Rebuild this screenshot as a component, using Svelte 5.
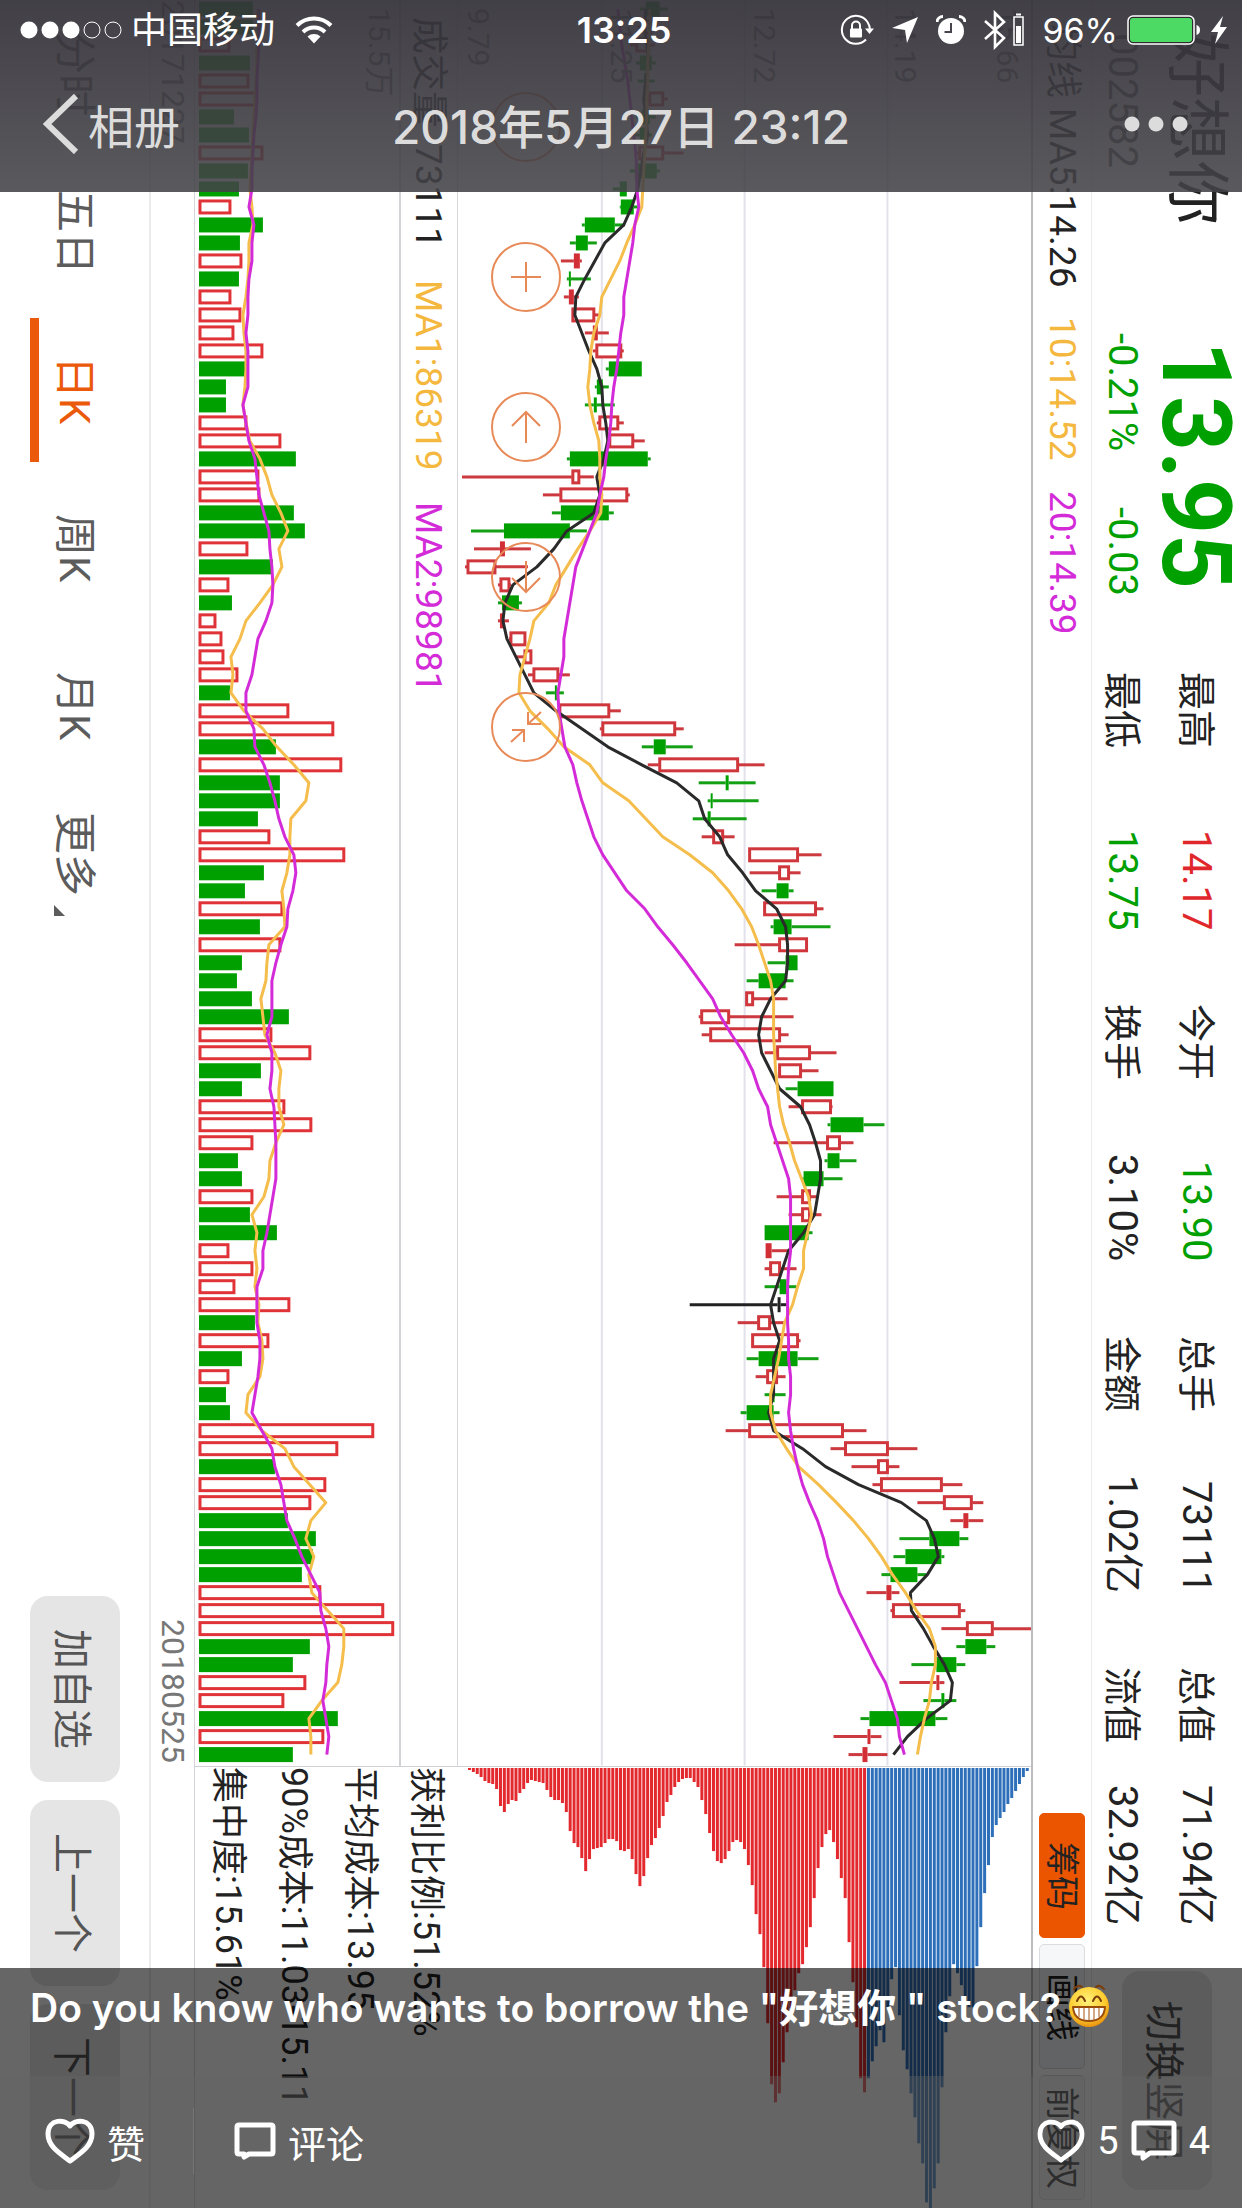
<script>
  const STEP = 18;
  const FIRST = 9;
  const BAR = 15;
  const VOLUME_BASE = 199;

  const rowY = i => FIRST + STEP * i;
  const toPoints = str => str.trim().split(/\s+/).map((x, i) => `${x},${rowY(i)}`).join(' ');

  // end of each volume bar, followed by its colour
  const volumes = `
    253g 253g 230r 250g 249r 257r 234g 249g 263r 248g 239g 231r 263g 240g 242r 239g 231r 241r 234r 263r
    246g 226g 226g 247r 281r 296g 259r 260r 294g 305g 248r 273g 229r 232g 216r 222r 224r 238r 230g 289r
    334r 276g 342r 280g 280g 258g 270r 345r 264g 245g 283r 260g 281r 242g 237g 252g 289g 272r 311r 261g
    242g 285r 312r 253r 238g 242g 253r 250g 277g 229r 253r 235r 290r 255g 269r 242g 229r 226g 230g 374r
    338r 275g 326r 311r 288g 316g 313g 302g 321r 384r 394r 310g 293g 306r 284r 338g 324r 293g
  `.trim().split(/\s+/).map(t => ({ end: parseInt(t), color: t.slice(-1) }));

  // low - body start - body end - high, followed by the colour
  const candles = `
    640-646-660-668g 638-644-652-660r 630-636-650-655r 636-640-652-656g 638-644-646-655g
    645-649-664-668r 636-642-650-656g 630-640-646-652g 636-639-664-684r 630-635-657-660g
    613-620-627-627g 620-621-634-640g 582-585-615-625g 570-576-588-597g 561-574-580-582r
    567-569-571-591g 564-569-574-579r 572-572-595-599r 585-593-598-609r 593-596-622-624r
    606-609-642-642g 595-597-603-609g 585-594-597-615g 597-599-619-624r 609-609-634-645r
    567-570-648-651g 462-572-580-594r 543-560-628-630r 552-561-609-614g 471-504-570-587g
    474-500-505-531r 465-467-496-528r 498-500-510-511r 498-502-519-522g 498-500-504-509r
    509-510-526-526r 517-524-532-532r 528-533-559-570r 546-555-557-564g 559-559-610-621r
    600-602-676-684r 642-654-666-693g 648-659-739-765r 699-726-729-756g 708-711-713-759g
    693-708-711-747g 702-713-724-735r 749-749-799-822r 750-779-790-801r 762-777-789-794g
    764-764-817-824r 771-774-792-831g 735-779-808-808r 768-786-798-798g 747-759-786-794g
    746-746-754-788r 699-701-730-794r 702-710-781-789r 765-777-811-837r 779-779-802-819r
    786-798-834-834g 789-802-832-833r 828-831-864-885g 774-827-841-854r 825-828-840-857g
    802-804-824-843g 777-802-811-819r 789-802-811-822r 765-765-809-813g 766-766-772-789r
    765-770-781-797r 765-780-787-797g 690-778-781-787k 738-758-771-785r 752-752-799-801r
    747-759-798-819g 756-767-778-786r 765-772-775-786g 741-747-774-780g 726-749-844-867r
    831-845-889-918r 852-878-889-900r 873-881-943-963r 918-944-973-984r 951-964-969-984r
    900-930-960-969g 894-906-942-945g 882-891-918-927g 867-887-892-900r 891-893-961-966r
    942-967-994-1032r 957-966-987-996g 912-937-957-966g 900-937-940-945r 924-942-945-957g
    861-870-936-948g 834-868-871-882r 849-863-868-888r
  `.trim().split(/\s+/).map(t => {
    const [low, from, to, high] = t.slice(0, -1).split('-').map(Number);
    const color = t.slice(-1);
    return { low, from, to, high, color, hollow: color === 'r' && to - from > 7 };
  });

  const ma5 = toPoints(`
    646 645 647 649 646 644 646 648 644 641 638 632 624 605 595 585 576 575 582 589 597 602 603 606 608
    604 597 600 594 567 554 537 513 505 503 507 516 525 534 556 582 608 642 677 699 705 720 728 743 756
    777 786 788 788 786 771 762 759 762 771 780 801 810 816 821 821 818 815 804 789 783 777 771 774 780
    774 774 774 769 774 803 826 859 902 927 935 939 928 911 912 924 934 945 953 951 927 908 894`);
  const ma10 = toPoints(`
    650 650 649 648 648 647 647 646 645 644 643 642 635 627 620 611 602 600 594 591 590 588 590 594 599
    600 600 602 601 590 578 567 556 549 534 530 525 520 519 530 548 564 590 603 629 646 663 690 713 729
    742 752 759 765 771 774 774 774 775 776 778 780 784 790 795 802 809 812 808 804 804 798 793 785 782
    779 775 771 771 776 787 799 819 837 854 869 882 893 906 917 930 936 936 932 930 925 921 918`);
  const ma20 = toPoints(`
    618 620 622 625 628 630 632 634 636 637 637 639 635 633 630 627 624 624 621 619 617 614 612 611 609
    606 604 600 597 590 583 576 573 570 567 564 564 561 558 559 562 565 573 577 582 588 594 603 615 627
    645 658 673 687 700 713 721 732 744 753 759 768 771 777 783 789 791 791 791 791 789 788 788 788 789
    789 791 791 789 791 794 798 803 810 818 824 828 834 840 849 858 867 876 886 892 898 900 905`);
  const volumeMa1 = toPoints(`
    258 258 257 257 256 255 254 253 252 251 250 252 253 249 249 248 246 243 244 246 246 245 243 246 250
    260 267 272 281 288 279 282 273 260 246 240 231 233 231 244 263 277 294 309 306 291 290 290 287 282
    284 285 269 267 266 261 263 265 275 281 279 279 284 276 270 269 264 252 257 255 257 255 259 258 262
    263 260 248 246 262 285 294 310 326 311 306 314 309 312 328 344 344 342 338 322 309 311 311`);
  const volumeMa2 = toPoints(`
    259 259 259 258 257 257 256 254 253 252 252 249 254 252 252 249 248 248 246 248 248 248 243 246 249
    255 257 259 264 269 270 272 273 272 266 258 255 252 246 246 254 255 264 270 275 279 285 294 296 293
    288 287 281 276 272 272 272 267 272 272 270 274 275 276 276 276 273 270 267 263 263 257 257 257 260
    260 258 255 252 262 272 275 281 284 287 295 302 311 320 321 326 329 327 326 323 326 329 327`);

  const CHIP_PROFIT = 103;
  const chips = `
    2 4 6 9 13 15 16 21 38 44 36 32 33 25 21 15 12 13 14 15 22 29 32 32 35 44 63 75 79 90 103 91 81 80 79
    75 71 71 73 82 83 81 91 106 118 108 90 77 70 60 48 34 27 19 14 11 10 10 14 19 32 46 65 83 93 95 91 83
    74 72 74 81 97 117 146 166 199 255 316 334 325 294 264 240 222 205 196 179 159 130 100 79 66 62 74 91
    110 130 174 214 259 310 324 310 293 278 262 274 240 211 199 247 282 301 325 349 375 395 434 442 420
    395 319 264 228 196 205 217 228 239 239 198 159 125 97 69 57 50 44 36 30 23 16 9 3
  `.trim().split(/\s+/).map(Number);

  const priceGrid = [602, 745, 888];
  const priceLabels = [
    [468, '9.79'],
    [611, '11.25'],
    [754, '12.72'],
    [896, '14.19'],
    [998, '15.66'],
  ];

  const tools = [
    { name: '缩小', d: 'M0 -15V15' },
    { name: '放大', d: 'M-15 0H15M0 -15V15' },
    { name: '左移', d: 'M0 16V-15M-14 -1L0 -15L14 -1' },
    { name: '右移', d: 'M0 -16V15M-14 1L0 15L14 1' },
    { name: '退出', d: 'M15 -15L2 -3M2 -15V-3H15M-15 15L-2 3M-14 3H-2V15' },
  ];

  const statRows = [
    [['最高', '14.17', 'up'], ['今开', '13.90', 'down'], ['总手', '73111', ''], ['总值', '71.94亿', '']],
    [['最低', '13.75', 'down'], ['换手', '3.10%', ''], ['金额', '1.02亿', ''], ['流值', '32.92亿', '']],
  ];

  const tabs = ['分时', '五日', '日K', '周K', '月K', '更多'];
  let currentTab = $state('日K');
</script>

<main class="viewer">
  <div class="photo">
    <aside class="side turned">
      <nav class="tabs">
        {#each tabs as tab}
          <button
            type="button"
            class="tab"
            class:is--current={tab === currentTab}
            onclick={() => (currentTab = tab)}
          >{tab}{#if tab === '更多'}<span class="tab__corner"></span>{/if}</button>
        {/each}
      </nav>
      <div class="side__actions">
        <button type="button" class="gray-btn">加自选</button>
        <button type="button" class="gray-btn">上一个</button>
        <button type="button" class="gray-btn">下一个</button>
      </div>
    </aside>

    <div class="dates turned">
      <div class="dates__range">
        <span>20171227</span>
        <span>20180525</span>
      </div>
    </div>

    <section class="charts">
      <div class="trend">
        <svg class="trend__volume" viewBox="195 0 204 1766" preserveAspectRatio="none">
          {#each volumes as v, i}
            {#if v.color === 'r'}
              <rect class="hollow" x={VOLUME_BASE + 1} y={rowY(i) - 6} width={v.end - VOLUME_BASE - 2} height="12" />
            {:else}
              <rect class="solid g" x={VOLUME_BASE} y={rowY(i) - BAR / 2} width={v.end - VOLUME_BASE} height={BAR} />
            {/if}
          {/each}
          <polyline class="line yellow" points={volumeMa1} />
          <polyline class="line magenta" points={volumeMa2} />
          <text class="axis" transform="translate(369 8) rotate(90)">15.5万</text>
        </svg>

        <div class="legend legend--volume turned">
          <span>成交量</span>
          <span class="legend__value">73111</span>
          <span class="text-yellow">MA1:86319</span>
          <span class="text-magenta">MA2:98981</span>
        </div>

        <div class="trend__price">
          <svg viewBox="458 0 574 1766" preserveAspectRatio="none">
            {#each priceGrid as x}
              <line class="grid" x1={x} x2={x} y1="0" y2="1766" />
            {/each}
            {#each candles as c, i}
              <line class="wick {c.color}" x1={c.low} x2={c.from} y1={rowY(i)} y2={rowY(i)} />
              <line class="wick {c.color}" x1={c.to} x2={c.high} y1={rowY(i)} y2={rowY(i)} />
              {#if c.hollow}
                <rect class="hollow dim" x={c.from + 1} y={rowY(i) - 6} width={c.to - c.from - 2} height="12" />
              {:else}
                <rect class="solid {c.color}" x={c.from} y={rowY(i) - BAR / 2} width={c.to - c.from} height={BAR} />
              {/if}
            {/each}
            <polyline class="line black" points={ma5} />
            <polyline class="line yellow" points={ma10} />
            <polyline class="line magenta" points={ma20} />
            {#each priceLabels as [x, label]}
              <text class="axis" transform="translate({x} 8) rotate(90)">{label}</text>
            {/each}
          </svg>
          <div class="tools">
            {#each tools as tool}
              <button type="button" class="tool" aria-label={tool.name}>
                <svg viewBox="-35 -35 70 70">
                  <circle r="34" />
                  <path d={tool.d} />
                </svg>
              </button>
            {/each}
          </div>
        </div>
      </div>

      <div class="detail">
        <div class="cost turned">
          <p>获利比例:51.52%</p>
          <p>平均成本:13.95</p>
          <p>90%成本:11.03-15.11</p>
          <p>集中度:15.61%</p>
        </div>
        <svg class="chips" viewBox="459 0 573 441" preserveAspectRatio="none">
          {#each chips as length, i}
            <rect class={i < CHIP_PROFIT ? 'chip-red' : 'chip-blue'} x={468 + 3.88 * i} y="1" width="3" height={length} />
          {/each}
        </svg>
      </div>
    </section>

    <div class="legend legend--price turned">
      <span>均线</span>
      <span class="legend__ma5">MA5:14.26</span>
      <span class="text-yellow">10:14.52</span>
      <span class="text-magenta">20:14.39</span>
      <div class="modes">
        <button type="button" class="mode is--active">筹码</button>
        <button type="button" class="mode">画线</button>
        <button type="button" class="mode">前复权</button>
      </div>
    </div>

    <header class="quote turned">
      <div class="quote__name">
        <h1>好想你</h1>
        <p>002582</p>
      </div>
      <div class="quote__price">
        <strong>13.95</strong>
        <p><span>-0.21%</span><span>-0.03</span></p>
      </div>
      <div class="stats">
        {#each statRows as row}
          <dl class="stats__row">
            {#each row as [label, value, tone]}
              <div class="stat">
                <dt>{label}</dt>
                <dd class={tone}>{value}</dd>
              </div>
            {/each}
          </dl>
        {/each}
      </div>
      <button type="button" class="gray-btn gray-btn--long">切换竖屏</button>
    </header>
  </div>

  <div class="top-bar">
    <div class="status">
      <div class="status__side">
        <svg class="signal" viewBox="0 0 102 20">
          <circle cx="9" cy="10" r="8.5" fill="#fff" />
          <circle cx="30" cy="10" r="8.5" fill="#fff" />
          <circle cx="51" cy="10" r="8.5" fill="#fff" />
          <circle cx="72" cy="10" r="8" fill="none" stroke="#fff" />
          <circle cx="93" cy="10" r="8" fill="none" stroke="#fff" />
        </svg>
        <span class="carrier">中国移动</span>
        <svg class="wifi" viewBox="0 0 38 28">
          <path d="M2 9.500A24 24 0 0 1 36 9.500" />
          <path d="M8 16A16 16 0 0 1 30 16" />
          <path class="wifi__dot" d="M12.500 20.500A10 10 0 0 1 25.500 20.500L19 27.500Z" />
        </svg>
      </div>
      <time class="clock">13:25</time>
      <div class="status__side status__side--right">
        <svg width="34" height="32" viewBox="0 0 34 32">
          <path d="M27.500 8A14 14 0 1 0 26 25.500M27.500 8Q30 12 30 16" fill="none" stroke="#fff" stroke-width="2" />
          <path d="M25 14.500H34L29.500 20Z" fill="#fff" />
          <path d="M12 15V11.500a4 4 0 0 1 8 0V15" fill="none" stroke="#fff" stroke-width="2" />
          <rect x="10" y="14.500" width="12" height="9" rx="1" fill="#fff" />
        </svg>
        <svg width="28" height="28" viewBox="0 0 28 28">
          <path d="M27 1L16 27L14 14L1 12Z" fill="#fff" />
        </svg>
        <svg width="30" height="30" viewBox="0 0 30 30">
          <circle cx="15" cy="16" r="13" fill="#fff" />
          <path d="M1 7A6 6 0 0 1 7 1.500M29 7A6 6 0 0 0 23 1.500" fill="none" stroke="#fff" stroke-width="3" />
          <path d="M15 8V17H8.500" fill="none" stroke="#47454b" stroke-width="2" />
        </svg>
        <svg width="42" height="40" viewBox="0 0 42 40">
          <path d="M2 11L21 28L12 37V3L21 12L2 29" fill="none" stroke="#fff" stroke-width="2.600" />
          <rect x="31" y="7" width="9" height="28" fill="none" stroke="#fff" stroke-width="1.500" />
          <rect x="33" y="16" width="5" height="17" fill="#fff" />
          <path d="M33 4.500H38" stroke="#fff" stroke-width="2" />
        </svg>
        <div class="battery">
          <span>96%</span>
          <svg width="74" height="30" viewBox="0 0 74 30">
            <rect x="1" y="1" width="66" height="28" rx="5" fill="#2c2b2f" stroke="#fff" stroke-width="1.500" />
            <rect x="3" y="3" width="62" height="24" rx="3" fill="#4cd964" />
            <path d="M69.500 10Q73 11 73 15T69.500 20Z" fill="#fff" />
          </svg>
          <svg width="18" height="30" viewBox="0 0 18 30">
            <path d="M13 1L1 17H8L5 29L17 12H10Z" fill="#fff" />
          </svg>
        </div>
      </div>
    </div>

    <div class="title-bar">
      <button type="button" class="back">
        <svg width="36" height="60" viewBox="0 0 36 60">
          <path d="M33 2L4 30L33 58" fill="none" stroke="currentColor" stroke-width="6" />
        </svg>
        <span>相册</span>
      </button>
      <h2>2018年5月27日 23:12</h2>
      <button type="button" class="more" aria-label="更多">
        <svg width="64" height="18" viewBox="0 0 64 18">
          <circle cx="8" cy="9" r="7.500" />
          <circle cx="32" cy="9" r="7.500" />
          <circle cx="56" cy="9" r="7.500" />
        </svg>
      </button>
    </div>
  </div>

  <div class="bottom-bar">
    <p class="caption">
      <span>Do you know who wants to borrow the "好想你 " stock?</span>
      <svg width="44" height="44" viewBox="0 0 44 44">
        <defs>
          <radialGradient id="face" cx="45%" cy="35%" r="65%">
            <stop offset="0" stop-color="#fff27a" />
            <stop offset="0.700" stop-color="#fdcb2e" />
            <stop offset="1" stop-color="#e9920f" />
          </radialGradient>
        </defs>
        <circle cx="22" cy="23" r="20" fill="url(#face)" />
        <path d="M7 5Q11 0 15 3M29 3Q33 0 37 5M10 17Q14 8 18 17M26 17Q30 8 34 17" fill="none" stroke="#7b3c08" stroke-width="2" stroke-linecap="round" />
        <path d="M6 23H38Q37 37 22 37T6 23Z" fill="#fff" stroke="#9a4d0b" stroke-width="2" stroke-linejoin="round" />
        <path d="M12 24V33M17 24V36M22 24V36M27 24V36M32 24V33" stroke="#b4703a" stroke-width="1.200" />
      </svg>
    </p>
    <div class="actions">
      <button type="button" class="action action--like">
        <svg width="50" height="46" viewBox="0 0 50 46">
          <path d="M25 8C21 1 3 0 3 16C3 29 16 36 25 43C34 36 47 29 47 16C47 0 29 1 25 8Z" />
        </svg>
        <span>赞</span>
      </button>
      <button type="button" class="action">
        <svg width="42" height="38" viewBox="0 0 42 38">
          <path d="M5 3H37Q39 3 39 5V30Q39 32 37 32H15L10 35V32H5Q3 32 3 30V5Q3 3 5 3Z" />
        </svg>
        <span>评论</span>
      </button>
      <button type="button" class="action action--counts" aria-label="详情">
        <svg width="48" height="44" viewBox="0 0 50 46">
          <path d="M25 8C21 1 3 0 3 16C3 29 16 36 25 43C34 36 47 29 47 16C47 0 29 1 25 8Z" />
        </svg>
        <span>5</span>
        <svg width="46" height="42" viewBox="0 0 46 42">
          <path d="M5 3H41Q43 3 43 5V31Q43 33 41 33H19L12 38V33H5Q3 33 3 31V5Q3 3 5 3Z" />
        </svg>
        <span>4</span>
      </button>
    </div>
  </div>
</main>

<style>
  :global(body) {
    background: #fff;
  }

  .viewer {
    height: 100vh;
    font-family: Roboto, 'Noto Sans CJK SC', sans-serif;
    color: #222;
    background: #fff;
    position: relative;
    overflow: hidden;
  }
  .viewer *,
  .viewer *::after {
    box-sizing: border-box;
  }
  .viewer :is(h1, h2, p, dl, dd) {
    margin: 0;
    font-weight: 400;
  }
  .viewer svg {
    display: block;
    flex-shrink: 0;
  }

  button {
    padding: 0;
    border: none;
    font: inherit;
    color: inherit;
    background: none;
    cursor: pointer;
  }

  .photo {
    height: 100%;
    display: flex;
  }
  .turned {
    writing-mode: vertical-rl;
    text-orientation: sideways;
    white-space: nowrap;
  }

  /* left side: period tabs and stock buttons */
  .side {
    width: 151px;
    padding: 2px 0 18px;
    border-right: 2px solid #ebebeb;
    display: flex;
    align-items: center;
    justify-content: space-between;
  }
  .tabs {
    display: flex;
    gap: 14px;
  }
  .tab {
    width: 90px;
    height: 144px;
    padding-right: 10px;
    font-size: 42px;
    line-height: 70px;
    text-align: center;
    color: #5c5c5c;
    border-left: 9px solid transparent;
  }
  .is--current {
    color: #eb5a0a;
    border-left-color: #eb5a0a;
  }
  .tab__corner {
    display: inline-block;
    margin-top: 8px;
    border-top: 11px solid transparent;
    border-left: 11px solid #5c5c5c;
    vertical-align: -6px;
  }
  .side__actions {
    display: flex;
    gap: 18px;
  }
  .gray-btn {
    width: 90px;
    height: 186px;
    font-size: 40px;
    text-align: center;
    color: #555;
    border-radius: 18px;
    background: #e5e5e5;
  }
  .gray-btn--long {
    height: 219px;
  }

  .dates {
    width: 43px;
    font-size: 32px;
    line-height: 42px;
    color: #777;
  }
  .dates__range {
    height: 80%;
    padding-bottom: 4px;
    display: flex;
    justify-content: space-between;
  }

  .charts {
    min-width: 0;
    border-left: 1px solid #d6d4da;
    display: flex;
    flex: 1;
    flex-direction: column;
  }
  .trend {
    min-height: 0;
    display: flex;
    flex: 4 1 0;
  }
  .trend__volume {
    width: 0;
    height: 100%;
    flex: 204 1 0;
  }
  .trend__price {
    flex: 574 1 0;
    position: relative;
  }
  .trend__price > svg {
    width: 100%;
    height: 100%;
  }
  .detail {
    min-height: 0;
    border-top: 1px solid #d0d0d4;
    display: flex;
    flex: 1 1 0;
  }
  .cost {
    width: 264px;
    font-size: 36px;
    line-height: 66px;
  }
  .chips {
    width: 0;
    height: 100%;
    flex: 1;
  }

  .solid.g { fill: #00a000; }
  .solid.r { fill: #d12f35; }
  .solid.k { fill: #222; }
  .chip-red { fill: #e3292d; }
  .chip-blue { fill: #2d6fb9; }
  .hollow {
    fill: #fff;
    stroke: #e03338;
    stroke-width: 3;
  }
  .hollow.dim { stroke: #cf373c; }
  .wick { stroke-width: 3; }
  .wick.g { stroke: #14a014; }
  .wick.r { stroke: #cc393e; }
  .wick.k { stroke: #222; }
  .grid {
    stroke: #e2e1ec;
    stroke-width: 2;
  }
  .line {
    fill: none;
    stroke-width: 3;
    stroke-linejoin: round;
  }
  .black { stroke: #2a2a2a; }
  .yellow { stroke: #f5bd4b; }
  .magenta { stroke: #d42bd9; }
  .axis {
    font-size: 30px;
    fill: #777;
  }

  .tools {
    display: flex;
    flex-direction: column;
    gap: 80px;
    position: absolute;
    top: 92px;
    left: 33px;
  }
  .tool {
    width: 70px;
    height: 70px;
  }
  .tool svg {
    fill: none;
    stroke: #e88a58;
    stroke-width: 2;
  }

  .legend {
    font-size: 37px;
    line-height: 58px;
    display: flex;
  }
  .legend--volume {
    width: 59px;
    padding-top: 17px;
    border-right: 1px solid #d8d8dc;
    border-left: 2px solid #d3d2d6;
    gap: 32px;
  }
  .legend__value {
    margin-top: -16px;
  }
  .legend--price {
    width: 61px;
    padding: 24px 0 8px;
    border-right: 1px solid #ececec;
    border-left: 2px solid #bdbdc0;
    gap: 30px;
  }
  .legend__ma5 {
    margin-top: -20px;
  }
  .text-yellow { color: #f5b83f; }
  .text-magenta { color: #d42bd9; }
  .modes {
    margin-top: auto;
    display: flex;
    align-items: center;
    gap: 6px;
  }
  .mode {
    width: 46px;
    height: 125px;
    font-size: 34px;
    line-height: 42px;
    text-align: center;
    border: 1px solid #d9dde0;
    border-radius: 5px;
    background: #f6f7f9;
  }
  .mode.is--active {
    border-color: #eb5500;
    background: #eb5500;
  }

  .quote {
    width: 150px;
    padding: 33px 0 18px;
    display: flex;
    align-items: center;
  }
  .quote__name h1 {
    font-size: 64px;
    line-height: 90px;
  }
  .quote__name p {
    font-size: 40px;
    line-height: 58px;
    color: #555;
  }
  .quote__price {
    margin-top: 108px;
    color: #00a000;
    text-align: center;
  }
  .quote__price strong {
    display: block;
    font-size: 96px;
    line-height: 90px;
  }
  .quote__price p {
    font-size: 40px;
    line-height: 58px;
    display: flex;
    gap: 56px;
  }
  .stats {
    margin: 76px 0 46px;
    flex: 1;
  }
  .stats__row {
    font-size: 38px;
    line-height: 58px;
    display: flex;
    gap: 74px;
  }
  .stats__row:first-child {
    line-height: 90px;
  }
  .stat {
    display: flex;
    flex: 1 1 0;
    justify-content: space-between;
  }
  .stat dd {
    font-size: 40px;
  }
  .stat .up { color: #e0282c; }
  .stat .down { color: #00a000; }

  /* bars over the photo */
  .top-bar {
    width: 100%;
    color: #fff;
    font-family: Inter, 'Noto Sans CJK SC', sans-serif;
    background: linear-gradient(rgba(54, 52, 59, 0.94), rgba(67, 66, 71, 0.88));
    position: absolute;
    top: 0;
    left: 0;
  }
  .status {
    height: 60px;
    padding: 0 14px 0 20px;
    display: flex;
    align-items: center;
  }
  .status__side {
    display: flex;
    flex: 1 1 0;
    align-items: center;
  }
  .status__side--right {
    gap: 17px;
    justify-content: flex-end;
  }
  .signal {
    width: 102px;
    height: 20px;
  }
  .carrier {
    margin: 0 20px 0 9px;
    font-size: 36px;
    line-height: 60px;
  }
  .wifi {
    width: 38px;
    height: 32px;
    fill: none;
    stroke: #fff;
    stroke-width: 4;
  }
  .wifi__dot {
    fill: #fff;
    stroke: none;
  }
  .clock {
    font-size: 36px;
    font-weight: 600;
  }
  .battery {
    font-size: 34px;
    display: flex;
    align-items: center;
    gap: 9px;
  }
  .title-bar {
    height: 132px;
    padding: 0 43px 4px;
    color: #dcdcdc;
    display: grid;
    grid-template-columns: 1fr auto 1fr;
    align-items: center;
  }
  .back,
  .more {
    display: flex;
    align-items: center;
    gap: 9px;
  }
  .back {
    font-size: 46px;
  }
  .more {
    padding-right: 11px;
    justify-content: flex-end;
    fill: currentColor;
  }
  .title-bar h2 {
    font-size: 46px;
    font-weight: 500;
  }

  .bottom-bar {
    width: 100%;
    color: #fff;
    position: absolute;
    bottom: 0;
    left: 0;
  }
  .caption {
    height: 108px;
    padding: 12px 30px 0;
    font-family: Inter, 'Noto Sans CJK SC', sans-serif;
    font-size: 39px;
    line-height: 56px;
    white-space: nowrap;
    background: rgba(0, 0, 0, 0.6);
    display: flex;
    align-items: flex-start;
    gap: 6px;
  }
  .caption span {
    font-weight: 600;
  }
  .caption svg {
    margin-top: 4px;
  }
  .actions {
    height: 132px;
    padding: 0 32px 2px 45px;
    font-size: 38px;
    background: rgba(50, 50, 50, 0.75);
    display: flex;
    align-items: center;
  }
  .action {
    display: flex;
    align-items: center;
    gap: 12px;
    height: 66px;
  }
  .action svg {
    fill: none;
    stroke: #fff;
    stroke-width: 5;
    stroke-linejoin: round;
  }
  .action--like {
    margin-right: 40px;
    padding-right: 48px;
    border-right: 1px solid #777;
  }
  .action--counts {
    margin-left: auto;
  }
</style>
